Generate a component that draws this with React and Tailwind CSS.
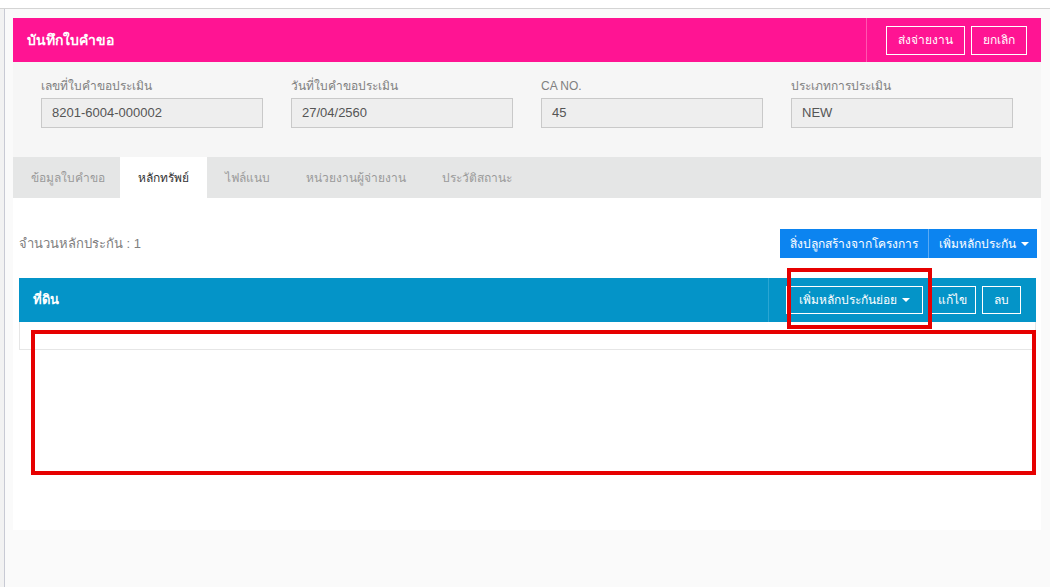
const fields = [
  { label: "เลขที่ใบคำขอประเมิน", value: "8201-6004-000002" },
  { label: "วันที่ใบคำขอประเมิน", value: "27/04/2560" },
  { label: "CA NO.", value: "45" },
  { label: "ประเภทการประเมิน", value: "NEW" },
];

const tabs = ["ข้อมูลใบคำขอ", "หลักทรัพย์", "ไฟล์แนบ", "หน่วยงานผู้จ่ายงาน", "ประวัติสถานะ"];

const Caret = () => (
  <span className="inline-block ml-[5px] w-0 h-0 border-l-[4px] border-r-[4px] border-t-[4px] border-l-transparent border-r-transparent border-t-white align-middle" />
);

const App = () => {
  return (
    <div
      className="relative h-[587px] w-full overflow-hidden bg-[#fafafa]"
      style={{ fontFamily: '"Liberation Sans", "Noto Sans", Tahoma, sans-serif' }}
    >
      {/* top strip */}
      <div className="h-[9px] bg-white border-b border-[#d4d4d4]" />

      <div className="flex">
        {/* left rail */}
        <div className="w-[5px] h-[578px] border-r border-[#c8cad4] bg-[#f2f2f2]" />

        <div className="flex-1 pl-[8px] pr-[9px] pt-[9px]">
          {/* header */}
          <div className="flex items-center h-[44px] bg-[#ff1493]">
            <h1 className="flex-1 pl-[14px] text-white text-[14px] font-bold">บันทึกใบคำขอ</h1>
            <div className="flex items-center gap-[6px] h-full pl-[19px] pr-[14px] border-l border-[#ff55b0]">
              <button className="h-[29px] px-[11px] border border-white text-white text-[12px]">ส่งจ่ายงาน</button>
              <button className="h-[29px] px-[11px] border border-white text-white text-[12px]">ยกเลิก</button>
            </div>
          </div>

          {/* form */}
          <div className="grid grid-cols-4 bg-[#f6f6f6] px-[14px] pt-[14px] pb-[29px]">
            {fields.map((f) => (
              <div key={f.label} className="px-[14px]">
                <label className="block h-[20px] leading-[20px] text-[12px] text-[#808080] mb-[2px]">{f.label}</label>
                <div className="h-[30px] border border-[#c9c9c9] bg-[#eeeeee] px-[10px] flex items-center text-[13px] text-[#555]">
                  {f.value}
                </div>
              </div>
            ))}
          </div>

          {/* tabs */}
          <div className="flex h-[41px] bg-[#e5e6e6]">
            {tabs.map((t, i) => (
              <div
                key={t}
                className={`flex items-center text-[12px] ${i === 0 ? "pl-[18px] pr-[15px]" : "px-[18px]"} ${
                  i === 1 ? "bg-white text-[#333]" : "text-[#9a9a9a]"
                }`}
              >
                {t}
              </div>
            ))}
          </div>

          {/* tab content */}
          <div className="h-[332px] bg-white pl-[6px] pr-[4px] pt-[31px]">
            <div className="flex items-center justify-between">
              <span className="text-[13px] text-[#808080]">จำนวนหลักประกัน : 1</span>
              <div className="flex h-[29px] bg-[#0c84f0] text-white text-[12px]">
                <button className="px-[10px]">สิ่งปลูกสร้างจากโครงการ</button>
                <button className="pl-[10px] pr-[8px] border-l border-[#5aaaf5] flex items-center">
                  เพิ่มหลักประกัน
                  <Caret />
                </button>
              </div>
            </div>

            {/* panel */}
            <div className="mt-[20px] mr-[1px]">
              <div className="flex items-center h-[44px] bg-[#0494c8]">
                <span className="flex-1 pl-[14px] text-white text-[13px] font-bold">ที่ดิน</span>
                <div className="flex items-center gap-[6px] h-full pl-[17px] pr-[15px] border-l border-[#2aa6d3]">
                  <button className="h-[28px] px-[12px] border border-white text-white text-[12px] flex items-center">
                    เพิ่มหลักประกันย่อย
                    <Caret />
                  </button>
                  <button className="h-[28px] px-[8px] border border-white text-white text-[12px]">แก้ไข</button>
                  <button className="h-[28px] px-[11px] border border-white text-white text-[12px]">ลบ</button>
                </div>
              </div>
              <div className="h-[28px] border border-t-0 border-[#e6e6e6]" />
            </div>
          </div>
        </div>
      </div>

      {/* red annotation boxes */}
      <div className="absolute left-[787px] top-[268px] w-[145px] h-[61px] border-[4px] border-[#e60000]" />
      <div className="absolute left-[31px] top-[330px] w-[1005px] h-[145px] border-[4px] border-[#e60000]" />
    </div>
  );
};

export default App;
